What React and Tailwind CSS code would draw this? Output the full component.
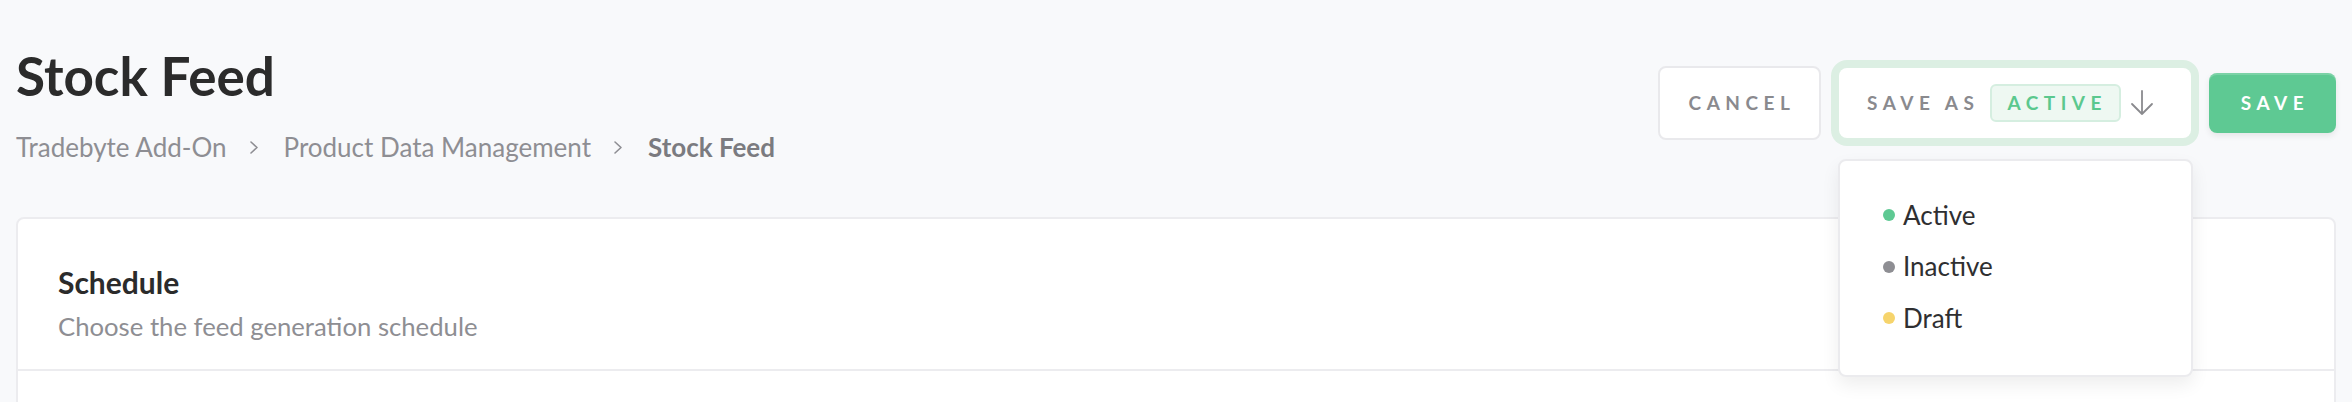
import React from 'react';

const statuses = [
  { label: 'Active', dot: 'bg-[#5ec993]' },
  { label: 'Inactive', dot: 'bg-[#8e8e93]' },
  { label: 'Draft', dot: 'bg-[#f6d46c]' },
];

const Chevron = () => (
  <svg width="10" height="15" viewBox="0 0 10 15" className="ml-[22px] mr-[25px]">
    <path d="M2 2l6 5.5L2 13" fill="none" stroke="#8e8e93" strokeWidth="1.6" strokeLinecap="round" strokeLinejoin="round" />
  </svg>
);

const SaveAsButton = () => (
  <div className="relative">
    <button className="flex h-[70px] w-[352px] items-center rounded-lg bg-white pl-[28px] shadow-[0_0_0_8px_#dcefe3]">
      <span className="text-[19px] font-bold tracking-[5.5px] text-[#8a8a8e]">SAVE AS</span>
      <span className="ml-[11px] flex h-[38px] items-center rounded-md border-2 border-[#d5eee0] bg-[#eef8f2] pl-[15px] pr-[12px] text-[19px] font-bold tracking-[5.5px] text-[#5bc88e]">
        ACTIVE
      </span>
      <svg width="24" height="28" viewBox="0 0 24 28" className="ml-[9px]">
        <path d="M12 2v23M2 15l10 10 10-10" fill="none" stroke="#8a8a8e" strokeWidth="1.8" strokeLinecap="round" strokeLinejoin="round" />
      </svg>
    </button>

    {/* status menu */}
    <div className="absolute left-[-1px] top-[91px] z-10 w-[355px] rounded-lg border-2 border-[#ebebee] bg-white pb-[31px] pt-[28px] shadow-[0_8px_18px_rgba(0,0,0,0.07)]">
      {statuses.map((s) => (
        <div key={s.label} className="flex h-[51.5px] items-center gap-[8px] pl-[43px] text-[26px] text-[#2f2f31]">
          <span className={`h-3 w-3 rounded-full ${s.dot}`} />
          {s.label}
        </div>
      ))}
    </div>
  </div>
);

const App = () => {
  return (
    <div className="h-screen w-full overflow-hidden bg-[#f8f9fb] font-['Lato',sans-serif]">
      <header className="flex items-center justify-between px-4 pt-[44px]">
        <div>
          <h1 className="text-[53px] font-bold leading-[1.2] text-[#2b2b2b]">Stock Feed</h1>
          <nav className="mt-[24px] flex items-center text-[26px] leading-[1.2] text-[#8e8e93]">
            <span>Tradebyte Add-On</span>
            <Chevron />
            <span>Product Data Management</span>
            <Chevron />
            <span className="font-bold text-[#7b7b80]">Stock Feed</span>
          </nav>
        </div>

        <div className="flex items-center gap-[18px]">
          <button className="h-[74px] w-[163px] rounded-lg border-2 border-[#e9e9ec] bg-white pl-[5px] text-[19px] font-bold tracking-[5.5px] text-[#8a8a8e]">
            CANCEL
          </button>
          <SaveAsButton />
          <button className="h-[60px] w-[127px] rounded-lg bg-[#5ec993] pl-[5px] text-[19px] font-bold tracking-[5.5px] text-white shadow-[inset_0_2px_0_rgba(255,255,255,0.18),0_3px_6px_rgba(0,0,0,0.08)]">
            SAVE
          </button>
        </div>
      </header>

      <section className="mx-4 mt-[54px] rounded-t-lg border-2 border-[#ececef] bg-white">
        <div className="border-b-2 border-[#ececef] px-[40px] pb-[27px] pt-[45px]">
          <h2 className="text-[30px] font-bold leading-[1.2] text-[#2b2b2b]">Schedule</h2>
          <p className="mt-[11px] text-[25.7px] leading-[1.2] text-[#8e8e93]">Choose the feed generation schedule</p>
        </div>
        <div className="h-[200px]" />
      </section>
    </div>
  );
};

export default App;
